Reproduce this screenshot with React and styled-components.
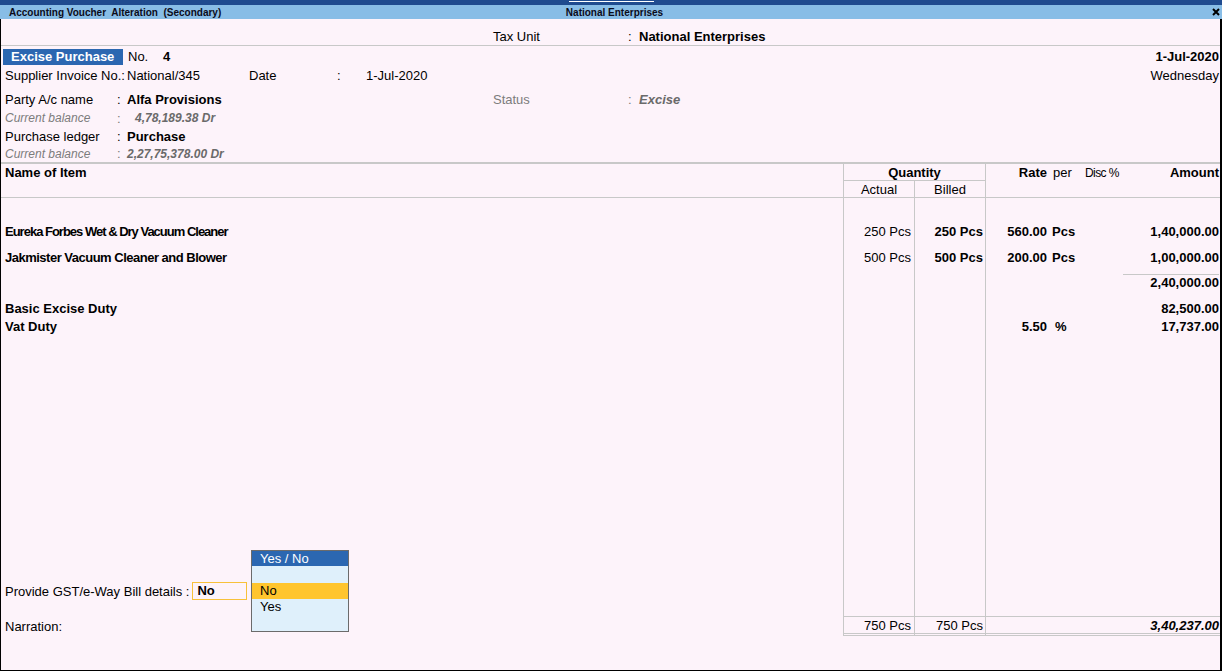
import React from 'react';
import styled, { createGlobalStyle } from 'styled-components';

const GlobalStyle = createGlobalStyle`
  html, body {
    margin: 0;
    padding: 0;
  }
  body {
    font-family: "Liberation Sans", Arial, sans-serif;
    color: #000;
    background: #fdf3fa;
  }
  * {
    box-sizing: border-box;
  }
`;

const Window = styled.div`
  display: flex;
  flex-direction: column;
  width: 1222px;
  height: 671px;
  overflow: hidden;
`;

const TopStrip = styled.div`
  height: 5px;
  background: #1f4b8f;
  display: flex;
  justify-content: center;
`;

const StripMark = styled.div`
  width: 85px;
  height: 1px;
  margin-top: 1px;
  background: #ffffff;
`;

const TitleBar = styled.div`
  height: 14px;
  background: #88bde6;
  display: grid;
  grid-template-columns: 1fr auto 1fr;
  align-items: center;
  padding: 0 2px 0 9px;
  font-size: 10px;
  font-weight: 700;
  color: #0b0b1a;
  white-space: pre;
`;

const CloseIcon = styled.svg`
  justify-self: end;
  width: 8px;
  height: 8px;
`;

const Body = styled.div`
  flex: 1;
  display: flex;
  flex-direction: column;
  background: #fdf3fa;
  border-left: 1px solid #000;
  border-right: 2px solid #000;
  border-bottom: 1px solid #000;
`;

const TaxRow = styled.div`
  height: 27px;
  display: flex;
  align-items: center;
  padding: 9px 0 0 492px;
  border-bottom: 1px solid #c8c8c8;
  font-size: 13px;
  line-height: 17px;
`;

const Header = styled.div`
  display: flex;
  flex-direction: column;
  padding: 2px 1px 0 4px;
  font-size: 13px;
`;

const InfoRow = styled.div`
  display: flex;
  align-items: center;
  height: ${p => p.$h}px;
  padding-top: ${p => (p.$pt || 0) + 1}px;
  line-height: ${p => p.$h - (p.$pt || 0) - 1}px;
`;

const Cell = styled.span`
  flex: none;
  width: ${p => (p.$w ? `${p.$w}px` : 'auto')};
  padding-left: ${p => p.$pl || 0}px;
  font-size: ${p => p.$size || 13}px;
  font-weight: ${p => (p.$bold ? 700 : 400)};
  font-style: ${p => (p.$italic ? 'italic' : 'normal')};
  color: ${p => (p.$muted ? '#7c7c7c' : p.$dim ? '#6a6a6a' : '#000')};
  white-space: nowrap;
`;

const Spacer = styled.span`
  flex: 1;
`;

const VoucherType = styled.span`
  flex: none;
  width: 120px;
  height: 16px;
  margin-left: -2px;
  margin-right: 5px;
  padding-left: 8px;
  background: #2b67b1;
  color: #fff;
  font-weight: 700;
  line-height: 16px;
`;

const Table = styled.div`
  flex: 1;
  display: flex;
  flex-direction: column;
  border-top: 2px solid #c8c8c8;
`;

const TRow = styled.div`
  display: grid;
  grid-template-columns: 842px 71px 71px 1fr;
  height: ${p => (p.$h ? `${p.$h}px` : 'auto')};
  flex: ${p => (p.$grow ? 1 : 'none')};
  border-bottom: ${p => (p.$ruled ? '1px solid #c8c8c8' : 'none')};
  font-size: 13px;
`;

const Col = styled.div`
  position: relative;
  display: flex;
  align-items: ${p => p.$align || 'center'};
  justify-content: ${p => p.$justify || 'flex-start'};
  grid-column: ${p => p.$span || 'auto'};
  padding: 0 ${p => p.$pr || 0}px 0 ${p => p.$pl || 0}px;
  border-left: ${p => (p.$first ? 'none' : '1px solid #c8c8c8')};
  border-top: ${p => (p.$total ? '1px solid #c8c8c8' : 'none')};
  border-bottom: ${p => (p.$total ? '3px double #c8c8c8' : p.$under ? '1px solid #c8c8c8' : 'none')};
  font-weight: ${p => (p.$bold ? 700 : 400)};
  white-space: nowrap;
`;

const ItemName = styled.span`
  padding-top: 1px;
  font-size: 13px;
  font-weight: 700;
  letter-spacing: ${p => (p.$narrow ? '-1px' : '-0.5px')};
`;

const RateGrid = styled.div`
  display: grid;
  grid-template-columns: 61px 37px 36px 1fr;
  align-items: ${p => p.$align || 'center'};
  width: 100%;
  height: 100%;
`;

const RateCell = styled.span`
  text-align: ${p => (p.$right ? 'right' : 'left')};
  padding: ${p => (p.$top ? `${p.$top}px` : 0)} ${p => p.$pr || 0}px 0 ${p => p.$pl || 0}px;
  font-size: ${p => p.$size || 13}px;
  font-weight: ${p => (p.$bold ? 700 : 400)};
  font-style: ${p => (p.$italic ? 'italic' : 'normal')};
  letter-spacing: ${p => (p.$narrow ? '-0.6px' : '0')};
  white-space: nowrap;
`;

const SubTotal = styled.span`
  justify-self: end;
  width: 96px;
  margin: 4px 1px 0 0;
  border-top: 1px solid #c8c8c8;
  text-align: right;
  line-height: 16px;
  font-weight: 700;
`;

const YesNoBox = styled.span`
  width: 55px;
  height: 18px;
  margin-left: 3px;
  padding-left: 4px;
  border: 1px solid #f8c13a;
  font-weight: 700;
  line-height: 16px;
`;

const Popup = styled.div`
  position: absolute;
  left: 250px;
  top: -30px;
  width: 98px;
  height: 82px;
  display: flex;
  flex-direction: column;
  background: #dff0fb;
  border: 1px solid #6b6b6b;
  font-size: 13px;
`;

const PopupTitle = styled.div`
  height: 15px;
  padding-left: 8px;
  background: #2b67b1;
  color: #fff;
  line-height: 15px;
  margin-bottom: 17px;
`;

const PopupItem = styled.div`
  height: 16px;
  padding-left: 8px;
  line-height: 16px;
  background: ${p => (p.$active ? '#ffc52e' : 'transparent')};
`;

const BottomGap = styled.div`
  height: 34px;
`;

function EmptyRow({ h, grow }) {
  return (
    <TRow $h={h} $grow={grow}>
      <Col $first />
      <Col />
      <Col />
      <Col />
    </TRow>
  );
}

const items = [
  { name: 'Eureka Forbes Wet & Dry Vacuum Cleaner', narrow: true, qty: '250 Pcs', rate: '560.00', amt: '1,40,000.00' },
  { name: 'Jakmister Vacuum Cleaner and Blower', qty: '500 Pcs', rate: '200.00', amt: '1,00,000.00' },
];

export default function App() {
  return (
    <Window>
      <GlobalStyle />
      <TopStrip>
        <StripMark />
      </TopStrip>
      <TitleBar>
        <span>Accounting Voucher  Alteration  (Secondary)</span>
        <span>National Enterprises</span>
        <CloseIcon viewBox="0 0 8 8">
          <path d="M1 1 L7 7 M7 1 L1 7" stroke="#000" strokeWidth="2" />
        </CloseIcon>
      </TitleBar>

      <Body>
        <TaxRow>
          <Cell $w={135}>Tax Unit</Cell>
          <Cell $w={11}>:</Cell>
          <Cell $bold>National Enterprises</Cell>
        </TaxRow>

        <Header>
          <InfoRow $h={17} $pt={-1}>
            <VoucherType>Excise Purchase</VoucherType>
            <Cell $w={35}>No.</Cell>
            <Cell $bold>4</Cell>
            <Spacer />
            <Cell $bold>1-Jul-2020</Cell>
          </InfoRow>
          <InfoRow $h={20}>
            <Cell $w={122}>Supplier Invoice No.:</Cell>
            <Cell $w={122}>National/345</Cell>
            <Cell $w={88}>Date</Cell>
            <Cell $w={29}>:</Cell>
            <Cell>1-Jul-2020</Cell>
            <Spacer />
            <Cell>Wednesday</Cell>
          </InfoRow>
          <InfoRow $h={24} $pt={4}>
            <Cell $w={112}>Party A/c name</Cell>
            <Cell $w={10}>:</Cell>
            <Cell $w={366} $bold>Alfa Provisions</Cell>
            <Cell $w={135} $muted>Status</Cell>
            <Cell $w={11} $muted>:</Cell>
            <Cell $bold $italic $dim>Excise</Cell>
          </InfoRow>
          <InfoRow $h={18}>
            <Cell $w={112} $size={12} $italic $muted>Current balance</Cell>
            <Cell $w={10} $muted>:</Cell>
            <Cell $pl={8} $size={12} $bold $italic $dim>4,78,189.38 Dr</Cell>
          </InfoRow>
          <InfoRow $h={18}>
            <Cell $w={112}>Purchase ledger</Cell>
            <Cell $w={10}>:</Cell>
            <Cell $bold>Purchase</Cell>
          </InfoRow>
          <InfoRow $h={17}>
            <Cell $w={112} $size={12} $italic $muted>Current balance</Cell>
            <Cell $w={10} $muted>:</Cell>
            <Cell $size={12} $bold $italic $dim>2,27,75,378.00 Dr</Cell>
          </InfoRow>
        </Header>

        <Table>
          <TRow $h={17}>
            <Col $first $pl={4} $bold>Name of Item</Col>
            <Col $span="span 2" $justify="center" $under $bold>Quantity</Col>
            <Col>
              <RateGrid>
                <RateCell $right $bold>Rate</RateCell>
                <RateCell $pl={6}>per</RateCell>
                <RateCell $pl={1} $size={12} $narrow>Disc %</RateCell>
                <RateCell $right $pr={1} $bold>Amount</RateCell>
              </RateGrid>
            </Col>
          </TRow>
          <TRow $h={17} $ruled>
            <Col $first />
            <Col $justify="center">Actual</Col>
            <Col $justify="center">Billed</Col>
            <Col />
          </TRow>

          <EmptyRow h={20} />

          {items.map(item => (
            <TRow key={item.name} $h={26}>
              <Col $first $pl={4}>
                <ItemName $narrow={item.narrow}>{item.name}</ItemName>
              </Col>
              <Col $justify="flex-end" $pr={3}>{item.qty}</Col>
              <Col $justify="flex-end" $pr={2} $bold>{item.qty}</Col>
              <Col>
                <RateGrid>
                  <RateCell $right $bold>{item.rate}</RateCell>
                  <RateCell $pl={5} $bold>Pcs</RateCell>
                  <RateCell />
                  <RateCell $right $pr={1} $bold>{item.amt}</RateCell>
                </RateGrid>
              </Col>
            </TRow>
          ))}

          <TRow $h={29}>
            <Col $first />
            <Col />
            <Col />
            <Col $align="flex-start">
              <RateGrid $align="start">
                <RateCell />
                <RateCell />
                <RateCell />
                <SubTotal>2,40,000.00</SubTotal>
              </RateGrid>
            </Col>
          </TRow>

          <TRow $h={18}>
            <Col $first $pl={4} $bold>Basic Excise Duty</Col>
            <Col />
            <Col />
            <Col>
              <RateGrid>
                <RateCell />
                <RateCell />
                <RateCell />
                <RateCell $right $pr={1} $bold>82,500.00</RateCell>
              </RateGrid>
            </Col>
          </TRow>
          <TRow $h={18}>
            <Col $first $pl={4} $bold>Vat Duty</Col>
            <Col />
            <Col />
            <Col>
              <RateGrid>
                <RateCell $right $bold>5.50</RateCell>
                <RateCell $pl={8} $bold>%</RateCell>
                <RateCell />
                <RateCell $right $pr={1} $bold>17,737.00</RateCell>
              </RateGrid>
            </Col>
          </TRow>

          <EmptyRow grow />

          <TRow $h={22}>
            <Col $first $pl={4}>
              Provide GST/e-Way Bill details :
              <YesNoBox>No</YesNoBox>
              <Popup>
                <PopupTitle>Yes / No</PopupTitle>
                <PopupItem $active>No</PopupItem>
                <PopupItem>Yes</PopupItem>
              </Popup>
            </Col>
            <Col />
            <Col />
            <Col />
          </TRow>
          <EmptyRow h={14} />

          <TRow $h={20}>
            <Col $first $pl={4}>Narration:</Col>
            <Col $total $justify="flex-end" $pr={3}>750 Pcs</Col>
            <Col $total $justify="flex-end" $pr={2}>750 Pcs</Col>
            <Col $total $justify="flex-end" $pr={1}>
              <RateCell $bold $italic>3,40,237.00</RateCell>
            </Col>
          </TRow>
          <BottomGap />
        </Table>
      </Body>
    </Window>
  );
}
